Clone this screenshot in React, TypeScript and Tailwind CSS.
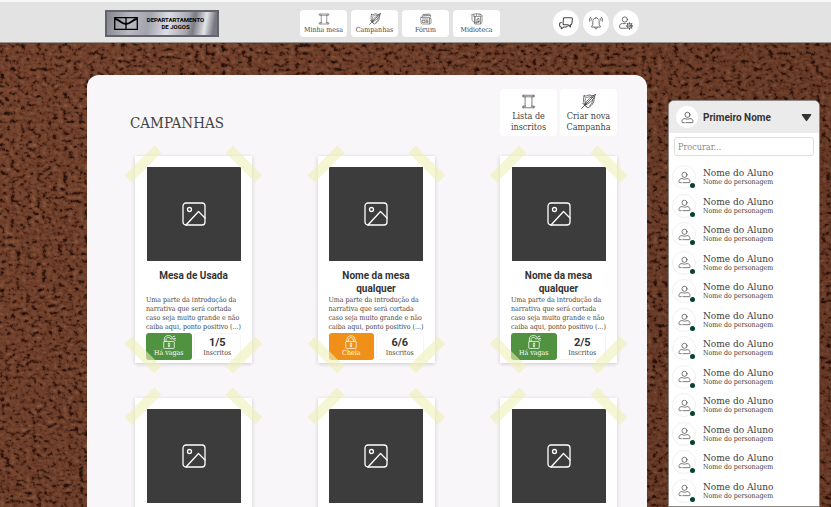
import React from "react";

const slab = "font-['Roboto_Slab','DejaVu_Serif_Condensed','DejaVu_Serif',serif]";

type IconProps = { className?: string };

function Svg({ className, children, box = 24 }: IconProps & { children: React.ReactNode; box?: number }) {
  return (
    <svg
      viewBox={`0 0 ${box} ${box}`}
      className={className}
      fill="none"
      stroke="currentColor"
      strokeWidth={1.3}
      strokeLinecap="round"
      strokeLinejoin="round"
      aria-hidden="true"
    >
      {children}
    </svg>
  );
}

const Scroll = ({ className }: IconProps) => (
  <Svg className={className}>
    <path strokeWidth={1.1} d="M4 2h16M4 4.500h16M4 2c-3 0-3 2.500 0 2.500M20 2c3 0 3 2.500 0 2.500M6.500 4.500v15M17.500 4.500v15M4 19.500h3.500M16.500 19.500H20M4 22h16M4 19.500c-3 0-3 2.500 0 2.500M20 19.500c3 0 3 2.500 0 2.500" />
  </Svg>
);

const Shield = ({ className }: IconProps) => (
  <Svg className={className}>
    <path d="M5 3c3 .5 5 0 8-1.500 2 1 5 1.500 8 1.500 1 9-2 15-10 19C4 18 3 11 5 3z" />
    <path strokeWidth={1} d="M7 6c3 0 4-.5 6-2 2 1.500 3 1.500 5 1.500M7 8c-1 4 0 7 2 9M18.500 9c0 4-1 7-5 10" />
    <path d="M23 1C17 3 9 10 6 17l4-1C17 13 21 7 23 1zM19 5 1 23M3 15l6 6" />
  </Svg>
);

const Newspaper = ({ className }: IconProps) => (
  <Svg className={className}>
    <path strokeWidth={1.1} d="m5 6 1-3 13-1 1 3M3 9l2-3 16-1v3M2 9h17v13H5c-2 0-3-1-3-3zM19 11h3v9c0 1-1 2-3 2M5 12h11M5 15h5v4H5zM12 15h4M12 17h4M12 19h4M8 4h8" />
  </Svg>
);

const Media = ({ className }: IconProps) => (
  <Svg className={className}>
    <path strokeWidth={1.1} d="M2 3c6-2 12-2 18 0v4M2 3v12l6 5M5 6l3 1v13M20 3l2 2v13l-3 4M8 7h11v15H8zM6 3v3M11 2v3M16 2v3" />
    <path d="M12 18v-6l4-1v6M12 18c-2-1-3 2-1 2 1 0 1-1 1-2M16 17c-2-1-3 2-1 2 1 0 1-1 1-2" />
  </Svg>
);

const Chat = ({ className }: IconProps) => (
  <Svg className={className}>
    <path strokeWidth={1.8} d="M9 3h12c1.500 0 2 1 2 2l-1 8c0 1-1 2-2 2h-1l1 4-5-4H9c-2 0-2-1-2-2l.5-8C7.500 4 8 3 9 3z" />
    <path strokeWidth={1.8} d="M4 11c-2 0-3 1-3 3v2c0 2 1 3 3 3v3l4-3h4c2 0 2-1 2-2" />
  </Svg>
);

const Bell = ({ className }: IconProps) => (
  <Svg className={className}>
    <path d="M10.500 4c0-2 3-2 3 0 3 .5 4 3 4 6v5l2 3v1h-15v-1l2-3v-5c0-3 1-5.500 4-6zM10 20c0 3 4 3 4 0M5 4c-1 1-1.500 2-1.500 4M3 2C1 4 .5 6 .5 9M19 4c1 1 1.500 2 1.500 4M21 2c2 2 2.500 4 2.500 7" />
  </Svg>
);

const UserGear = ({ className }: IconProps) => (
  <Svg className={className}>
    <circle cx="10" cy="6" r="4.500" />
    <path d="M12 21H3c-1 0-2-.5-2-2 0-5 2-6 5-6h5" />
    <circle cx="18" cy="17" r="4" />
    <circle cx="18" cy="17" r="1.500" />
    <path strokeWidth={1.8} d="M18 11.500v1M18 21.500v1M12.500 17h1M22.500 17h1M14 13l.7.7M21.300 20.300l.7.7M14 21l.7-.7M21.300 13.700l.7-.7" />
  </Svg>
);

const User = ({ className }: IconProps) => (
  <Svg className={className}>
    <circle cx="12" cy="7" r="4.700" />
    <path d="M6 21.500H3c-.8 0-1.200-.5-1.200-1.500 0-4 2-6 5.500-6 3 1.300 6.400 1.300 9.400 0 3.500 0 5.500 2 5.500 6 0 1-.4 1.500-1.200 1.500H9" />
  </Svg>
);

const Picture = ({ className }: IconProps) => (
  <Svg className={className}>
    <rect x="1" y="1" width="22" height="22" rx="3" />
    <circle cx="7.500" cy="7.500" r="2" />
    <path d="M4 23 16.500 9.500 23 16" />
  </Svg>
);

const Lock = ({ className, open }: IconProps & { open: boolean }) => (
  <Svg className={className}>
    <rect x="3" y="11" width="18" height="12" rx="1" />
    {open ? (
      <path d="M4 11V7c0-8 13-8 14-1l-3 1c-1-4-8-4-8 0v4M19 3l3-1M20 6h3M20 8l3 1" />
    ) : (
      <path d="M5 11V8c0-9 14-9 14 0v3M8 11V8c0-5 8-5 8 0v3" />
    )}
    <path d="M12 14c-2 0-2 2-.7 3l-.5 3h2.400l-.5-3c1.300-1 1.300-3-.7-3z" />
  </Svg>
);

function Cork() {
  return (
    <svg className="absolute inset-0 -z-10 h-full w-full" aria-hidden="true">
      <defs>
        <filter id="cork" x="0" y="0" width="100%" height="100%" colorInterpolationFilters="sRGB">
          <feTurbulence type="fractalNoise" baseFrequency="0.19 0.25" numOctaves={3} seed={23} />
          <feColorMatrix values="1.3 .6 .3 0 -.6  1.3 .6 .3 0 -.6  1.3 .6 .3 0 -.6  0 0 0 0 1" />
          <feComponentTransfer>
            <feFuncR type="table" tableValues=".14 .18 .25 .38 .43 .45 .47 .48 .51 .54" />
            <feFuncG type="table" tableValues=".06 .08 .13 .20 .24 .26 .28 .29 .32 .36" />
            <feFuncB type="table" tableValues=".04 .05 .08 .13 .16 .18 .19 .20 .23 .26" />
          </feComponentTransfer>
        </filter>
        <linearGradient id="shade" x1="0" y1="0" x2="1" y2=".5">
          <stop offset="0" stopColor="#200a04" stopOpacity="0" />
          <stop offset="1" stopColor="#200a04" stopOpacity=".15" />
        </linearGradient>
      </defs>
      <rect width="100%" height="100%" filter="url(#cork)" />
      <rect width="100%" height="100%" fill="url(#shade)" />
    </svg>
  );
}

const nav = [
  { label: "Minha mesa", Icon: Scroll },
  { label: "Campanhas", Icon: Shield },
  { label: "Fórum", Icon: Newspaper },
  { label: "Midioteca", Icon: Media },
];

const tools = [
  { label: "Mensagens", Icon: Chat },
  { label: "Notificações", Icon: Bell },
  { label: "Conta", Icon: UserGear },
];

function Header() {
  return (
    <header className="flex h-[43px] items-center border-t-2 border-b border-t-[#f8f8f8] border-b-[#999590] bg-[#e3e3e3] pt-[2px] pl-[105px]">
      <a
        href="#inicio"
        className="flex h-[27px] w-[114px] shrink-0 items-center border-2 border-[#62636b] bg-[linear-gradient(100deg,#85858d_0%,#b9b9c2_22%,#a3a3ad_38%,#dcdee4_55%,#a6a7b1_72%,#7a7b84_78%,#e2e4e8_88%,#777881_96%)] pl-[7px] font-[Roboto,sans-serif] text-[6px] leading-[7px] font-bold text-black"
      >
        <svg viewBox="0 0 24 13" className="h-[13px] w-6 shrink-0" fill="none" stroke="black" strokeWidth="1.300" aria-hidden="true">
          <path d="M.7.7h22.600v11.600H.7zM12 .7v11.600" />
          <path strokeWidth="1.800" d="M1 2c4 0 6 5 11 5s7-5 11-5" />
        </svg>
        <span className="flex-1 pr-1 text-center">
          DEPARTARTAMENTO
          <br />
          DE JOGOS
        </span>
      </a>
      <nav className="ml-[81px] flex gap-1">
        {nav.map(({ label, Icon }) => (
          <button
            key={label}
            className={`flex h-[27px] w-[47px] flex-col items-center rounded-sm bg-white pt-[3px] text-[7px] leading-[10px] whitespace-nowrap text-[#444] ${slab}`}
          >
            <Icon className="h-3 w-3 shrink-0" />
            {label}
          </button>
        ))}
      </nav>
      <div className="ml-[53px] flex gap-1">
        {tools.map(({ label, Icon }) => (
          <button key={label} aria-label={label} className="grid size-[26px] place-items-center rounded-full bg-white text-[#444]">
            <Icon className="size-[14px]" />
          </button>
        ))}
      </div>
    </header>
  );
}

const tape = "absolute h-[10px] w-[42px] bg-[#eff0b8]/60";

type Table = { name: string; seats: string; open: boolean };

const tables: Table[] = [
  { name: "Mesa de Usada", seats: "1/5", open: true },
  { name: "Nome da mesa qualquer", seats: "6/6", open: false },
  { name: "Nome da mesa qualquer", seats: "2/5", open: true },
  { name: "Mesa de Usada", seats: "1/5", open: true },
  { name: "Nome da mesa qualquer", seats: "6/6", open: false },
  { name: "Nome da mesa qualquer", seats: "2/5", open: true },
];

function Card({ name, seats, open }: Table) {
  return (
    <article className="relative flex h-[207px] flex-col bg-white px-[11px] pt-[11px] pb-[3px] shadow-[0_1px_4px_rgba(0,0,0,0.18)]">
      <div className="mx-auto grid size-[94px] shrink-0 place-items-center bg-[#3c3c3c] text-white">
        <Picture className="size-6" />
      </div>
      <h2 className="mt-2 h-[27px] px-2 text-center font-[Roboto,sans-serif] text-[10px] leading-[13px] font-bold text-[#333]">{name}</h2>
      <p className={`text-[7px] leading-[9px] whitespace-nowrap text-[#444] ${slab}`}>
        Uma parte da introdução da
        <br />
        narrativa que será cortada
        <br />
        caso seja muito grande e não
        <br />
        caiba aqui, ponto positivo (...)
      </p>
      <div className={`mt-auto flex h-[27px] gap-[2px] text-[7px] leading-[9px] ${slab}`}>
        <button className={`flex flex-1 flex-col items-center rounded-[3px] pt-[2px] text-white ${open ? "bg-[#519240]" : "bg-[#f09018]"}`}>
          <Lock open={open} className="size-[14px] shrink-0" />
          {open ? "Há vagas" : "Cheia"}
        </button>
        <div className="flex flex-1 flex-col items-center rounded-[3px] border border-[#f5f5f5] pt-[2px] text-[#444]">
          <strong className="font-[Roboto,sans-serif] text-[11px] leading-[13px] font-bold text-[#333]">{seats}</strong>
          Inscritos
        </div>
      </div>
      <span className={`${tape} top-[3px] -left-[13px] -rotate-45`} />
      <span className={`${tape} top-[3px] -right-[13px] rotate-45`} />
      <span className={`${tape} bottom-[3px] -left-[13px] rotate-45`} />
      <span className={`${tape} -right-[13px] bottom-[3px] -rotate-45`} />
    </article>
  );
}

const actions = [
  { first: "Lista de", second: "inscritos", Icon: Scroll },
  { first: "Criar nova", second: "Campanha", Icon: Shield },
];

function Campaigns() {
  return (
    <main className="mt-8 min-w-0 flex-1 self-stretch overflow-hidden rounded-t-xl bg-[#f8f6f8] pt-[14px] pr-[30px] pl-[43px]">
      <div className="flex items-start justify-between">
        <h1 className={`mt-6 text-[15px] leading-5 text-[#444] ${slab}`}>CAMPANHAS</h1>
        <div className="flex gap-[3px]">
          {actions.map(({ first, second, Icon }) => (
            <button
              key={second}
              className={`flex h-[47px] w-[57px] flex-col items-center rounded-sm bg-white pt-[5px] text-[9px] leading-[11px] text-[#444] ${slab}`}
            >
              <Icon className="mb-[2px] size-[15px] shrink-0" />
              <span>{first}</span>
              <span>{second}</span>
            </button>
          ))}
        </div>
      </div>
      <div className="mt-5 grid grid-cols-[repeat(3,117px)] justify-between gap-y-[35px] pl-[5px]">
        {tables.map((table, i) => (
          <Card key={i} {...table} />
        ))}
      </div>
    </main>
  );
}

function Students() {
  return (
    <aside className="mt-[57px] flex w-[152px] shrink-0 flex-col overflow-hidden rounded-t-md border border-[#8c8886] bg-white">
      <button className="flex h-8 shrink-0 items-center bg-[#ebebeb] px-[7px] text-[#333]">
        <span className="grid size-[22px] place-items-center rounded-full bg-white">
          <User className="size-[13px]" />
        </span>
        <span className="ml-[5px] font-[Roboto,sans-serif] text-[10px] font-bold">Primeiro Nome</span>
        <svg viewBox="0 0 10 7" className="ml-auto h-[7px] w-[11px]" fill="#333" aria-hidden="true">
          <path d="M.8 0h8.400q1 0 .5 1L5.800 6.400q-.8 1-1.600 0L.3 1Q-.2 0 .8 0z" />
        </svg>
      </button>
      <input
        type="search"
        aria-label="Procurar"
        placeholder="Procurar..."
        className={`mx-[5px] mt-1 h-[19px] shrink-0 rounded-[3px] border border-[#ddd] bg-white px-[3px] text-[9px] placeholder:text-[#8a8a8a] ${slab}`}
      />
      <ul className="mt-[9px] flex flex-1 flex-col justify-between pb-[3px] pl-[3px]">
        {Array.from({ length: 12 }, (_, i) => (
          <li key={i} className="flex h-6 items-center">
            <span className="relative grid size-6 place-items-center rounded-full border border-[#f0f0f0] text-[#444]">
              <User className="size-[13px]" />
              <i className="absolute right-0 bottom-0 size-[5px] rounded-full bg-[#06432b]" />
            </span>
            <span className={`ml-[7px] flex flex-col text-[#3c3c3c] ${slab}`}>
              <span className="text-[10px] leading-[11px]">Nome do Aluno</span>
              <span className="text-[7px] leading-[9px]">Nome do personagem</span>
            </span>
          </li>
        ))}
      </ul>
    </aside>
  );
}

export default function App() {
  return (
    <div className="relative isolate flex h-screen flex-col overflow-hidden">
      <Cork />
      <Header />
      <div className="flex min-h-0 flex-1 gap-[21px] pr-[11px] pl-[87px]">
        <Campaigns />
        <Students />
      </div>
    </div>
  );
}
